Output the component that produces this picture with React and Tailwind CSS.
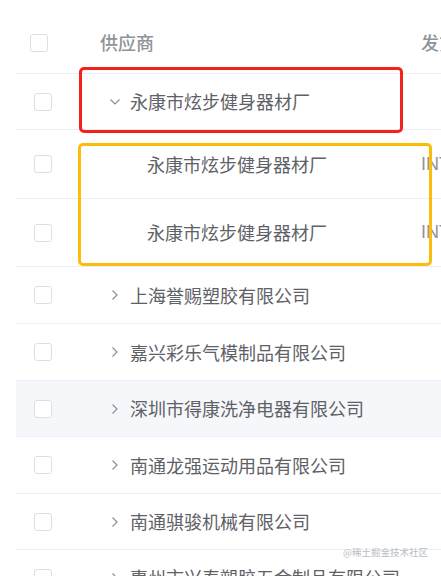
const rows = [
  { name: '永康市炫步健身器材厂', type: 'open', h: 'h-[56px]' },
  { name: '永康市炫步健身器材厂', type: 'child', h: 'h-[69px]', extra: 'INT' },
  { name: '永康市炫步健身器材厂', type: 'child', h: 'h-[68px]', extra: 'INT' },
  { name: '上海誉赐塑胶有限公司', type: 'closed', h: 'h-[57px]' },
  { name: '嘉兴彩乐气模制品有限公司', type: 'closed', h: 'h-[57px]' },
  { name: '深圳市得康洗净电器有限公司', type: 'closed', h: 'h-[56px]', hover: true },
  { name: '南通龙强运动用品有限公司', type: 'closed', h: 'h-[57px]' },
  { name: '南通骐骏机械有限公司', type: 'closed', h: 'h-[56px]' },
  { name: '惠州市兴泰塑胶五金制品有限公司', type: 'closed', h: 'h-[56px]' },
];

const Checkbox = () => (
  <span className="block w-[18px] h-[18px] rounded-[3px] border border-[#dcdfe6] bg-white" />
);

const Chevron = ({ open }) => (
  <svg width="10" height="10" viewBox="0 0 10 10" className="shrink-0" fill="none" stroke="#8c8f96" strokeWidth="1.2">
    {open ? <polyline points="0.5,2.5 5,7 9.5,2.5" /> : <polyline points="2.5,0.5 7,5 2.5,9.5" />}
  </svg>
);

export default function App() {
  return (
    <div
      className="relative w-[441px] h-[576px] overflow-hidden bg-white"
      style={{ fontFamily: '"Noto Sans CJK SC", "Noto Sans", sans-serif' }}
    >
      <div className="pl-4">
        {/* header */}
        <div className="flex items-center h-[74px] pt-3 border-b border-[#ebeef5]">
          <div className="w-[84px] shrink-0 pl-[14px]">
            <Checkbox />
          </div>
          <div className="w-[321px] shrink-0 text-[18px] font-medium text-[#909399]">供应商</div>
          <div className="text-[18px] font-medium text-[#909399] whitespace-nowrap">发货</div>
        </div>

        {rows.map((r, i) => (
          <div
            key={i}
            className={`flex items-center ${r.h} border-b border-[#ebeef5] ${r.hover ? 'bg-[#f5f7fa]' : ''}`}
          >
            <div className="w-[84px] shrink-0 pl-[18px]">
              <Checkbox />
            </div>
            <div
              className={`w-[321px] shrink-0 flex items-center text-[18px] text-[#5e6166] whitespace-nowrap ${
                r.type === 'child' ? 'pl-[47px]' : 'pl-[10px] gap-[10px]'
              }`}
            >
              {r.type !== 'child' && <Chevron open={r.type === 'open'} />}
              <span>{r.name}</span>
            </div>
            {r.extra && (
              <div className="text-[18px] text-[#909399] whitespace-nowrap" style={{ fontFamily: '"Liberation Sans", sans-serif' }}>
                {r.extra}
              </div>
            )}
          </div>
        ))}
      </div>

      {/* annotation boxes */}
      <div className="absolute left-[79px] top-[67px] w-[324px] h-[66px] border-[3px] border-[#f5221b] rounded-[5px]" />
      <div className="absolute left-[78px] top-[143px] w-[354px] h-[123px] border-[3px] border-[#fbbc0a] rounded-[5px]" />

      <div className="absolute left-[343px] top-[545px] text-[9.5px] text-[#b8bcc4] whitespace-nowrap">
        @稀土掘金技术社区
      </div>
    </div>
  );
}
